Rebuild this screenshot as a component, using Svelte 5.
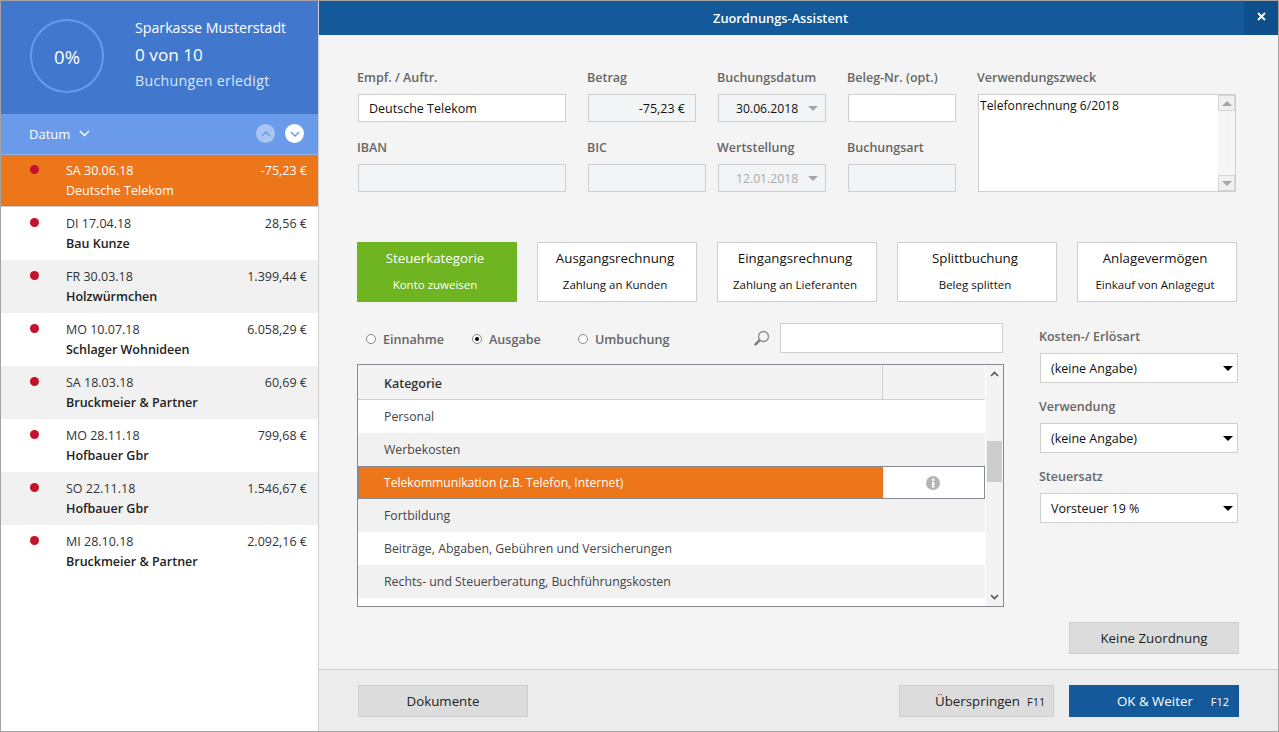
<script lang="ts">
const bookings = [
  { date: "SA 30.06.18", amount: "-75,23 €", name: "Deutsche Telekom" },
  { date: "DI 17.04.18", amount: "28,56 €", name: "Bau Kunze" },
  { date: "FR 30.03.18", amount: "1.399,44 €", name: "Holzwürmchen" },
  { date: "MO 10.07.18", amount: "6.058,29 €", name: "Schlager Wohnideen" },
  { date: "SA 18.03.18", amount: "60,69 €", name: "Bruckmeier & Partner" },
  { date: "MO 28.11.18", amount: "799,68 €", name: "Hofbauer Gbr" },
  { date: "SO 22.11.18", amount: "1.546,67 €", name: "Hofbauer Gbr" },
  { date: "MI 28.10.18", amount: "2.092,16 €", name: "Bruckmeier & Partner" }
];

const tiles = [
  { title: "Steuerkategorie", sub: "Konto zuweisen" },
  { title: "Ausgangsrechnung", sub: "Zahlung an Kunden" },
  { title: "Eingangsrechnung", sub: "Zahlung an Lieferanten" },
  { title: "Splittbuchung", sub: "Beleg splitten" },
  { title: "Anlagevermögen", sub: "Einkauf von Anlagegut" }
];

const categories = [
  "Personal",
  "Werbekosten",
  "Telekommunikation (z.B. Telefon, Internet)",
  "Fortbildung",
  "Beiträge, Abgaben, Gebühren und Versicherungen",
  "Rechts- und Steuerberatung, Buchführungskosten"
];

const radios = ["Einnahme", "Ausgabe", "Umbuchung"];
const selects = [
  { label: "Kosten-/ Erlösart", value: "(keine Angabe)" },
  { label: "Verwendung", value: "(keine Angabe)" },
  { label: "Steuersatz", value: "Vorsteuer 19 %" }
];
</script>

<div class="window">
  <aside class="sidebar">
    <header class="summary">
      <div class="ring">0%</div>
      <div class="summary-text">
        <div class="bank">Sparkasse Musterstadt</div>
        <div class="count">0 von 10</div>
        <div class="done">Buchungen erledigt</div>
      </div>
    </header>
    <div class="sortbar">
      <span class="sort-label">Datum</span>
      <svg class="sort-chevron" width="11" height="7" viewBox="0 0 11 7"><path d="M1 1l4.500 4.500L10 1" fill="none" stroke="#fff" stroke-width="1.400"/></svg>
      <span class="round faded">
        <svg width="10" height="6" viewBox="0 0 10 6"><path d="M1 5l4-4 4 4" fill="none" stroke="#6a9bea" stroke-width="1.500"/></svg>
      </span>
      <span class="round">
        <svg width="10" height="6" viewBox="0 0 10 6"><path d="M1 1l4 4 4-4" fill="none" stroke="#6a9bea" stroke-width="1.500"/></svg>
      </span>
    </div>
    <ul class="bookings">
      {#each bookings as b, i}
        <li class="booking" class:active={i == 0} class:alt={i % 2 == 0}>
          <span class="dot"></span>
          <div class="booking-body">
            <div class="booking-top"><span>{b.date}</span><span>{b.amount}</span></div>
            <div class="booking-name">{b.name}</div>
          </div>
        </li>
      {/each}
    </ul>
  </aside>

  <main class="main">
    <div class="titlebar">
      <span class="title">Zuordnungs-Assistent</span>
      <button class="close" aria-label="Schließen">
        <svg width="9" height="9" viewBox="0 0 9 9"><path d="M1 1l7 7M8 1l-7 7" stroke="#fff" stroke-width="1.800"/></svg>
      </button>
    </div>

    <div class="content">
      <section class="form">
        <label class="field"><span>Empf. / Auftr.</span><input value="Deutsche Telekom" /></label>
        <label class="field"><span>Betrag</span><input class="off right" value="-75,23 €" /></label>
        <div class="field">
          <span>Buchungsdatum</span>
          <div class="datebox"><span>30.06.2018</span><i class="tri grey"></i></div>
        </div>
        <label class="field"><span>Beleg-Nr. (opt.)</span><input /></label>
        <div class="field f-purpose">
          <span>Verwendungszweck</span>
          <div class="purpose">
            <div class="purpose-text">Telefonrechnung 6/2018</div>
            <div class="mini-scroll">
              <div class="mini-btn"><i class="tri up"></i></div>
              <div class="mini-track"></div>
              <div class="mini-btn"><i class="tri grey"></i></div>
            </div>
          </div>
        </div>
        <label class="field"><span>IBAN</span><input class="off" /></label>
        <label class="field f-bic"><span>BIC</span><input class="off" /></label>
        <div class="field">
          <span>Wertstellung</span>
          <div class="datebox disabled"><span>12.01.2018</span><i class="tri grey"></i></div>
        </div>
        <label class="field"><span>Buchungsart</span><input class="off" /></label>
      </section>

      <section class="tiles">
        {#each tiles as t, i}
          <button class="tile" class:picked={i == 0}>
            <span class="tile-title">{t.title}</span>
            <span class="tile-sub">{t.sub}</span>
          </button>
        {/each}
      </section>

      <section class="lower">
        <div class="lower-left">
          <div class="filter">
            <div class="radios">
              {#each radios as r, i}
                <span class="radio-item">
                  <span class="radio" class:on={i == 1}></span>{r}
                </span>
              {/each}
            </div>
            <svg class="lens" width="17" height="17" viewBox="0 0 17 17">
              <circle cx="10.500" cy="6.500" r="5" fill="none" stroke="#8a8a8a" stroke-width="1.300"/>
              <path d="M6.800 10.200L1.800 15.200" stroke="#7c7c7c" stroke-width="2.400"/>
            </svg>
            <input class="search" />
          </div>

          <div class="table">
            <div class="table-main">
              <div class="thead">
                <div class="th-name">Kategorie</div>
                <div class="th-extra"></div>
              </div>
              {#each categories as c, i}
                <div class="row" class:alt={i % 2 == 1} class:sel={i == 2}>
                  <div class="row-name">{c}</div>
                  {#if i == 2}
                    <div class="row-info">
                      <svg width="14" height="14" viewBox="0 0 14 14">
                        <circle cx="7" cy="7" r="7" fill="#b4b4b4"/>
                        <rect x="6" y="6" width="2.400" height="5.500" fill="#fff"/>
                        <rect x="6" y="2.700" width="2.400" height="2.200" fill="#fff"/>
                      </svg>
                    </div>
                  {/if}
                </div>
              {/each}
            </div>
            <div class="scrollbar">
              <svg width="9" height="6" viewBox="0 0 9 6"><path d="M1 5l3.500-3.500L8 5" fill="none" stroke="#555" stroke-width="1.600"/></svg>
              <div class="thumb"></div>
              <svg width="9" height="6" viewBox="0 0 9 6"><path d="M1 1l3.500 3.500L8 1" fill="none" stroke="#555" stroke-width="1.600"/></svg>
            </div>
          </div>
        </div>

        <div class="lower-right">
          {#each selects as s}
            <div class="select-field">
              <span class="select-label">{s.label}</span>
              <div class="select"><span>{s.value}</span><i class="tri black"></i></div>
            </div>
          {/each}
        </div>
      </section>

      <div class="none-row"><button class="btn">Keine Zuordnung</button></div>
    </div>

    <footer class="footer">
      <button class="btn">Dokumente</button>
      <div class="footer-right">
        <button class="btn skip">Überspringen<span class="key">F11</span></button>
        <button class="btn primary">OK &amp; Weiter<span class="key">F12</span></button>
      </div>
    </footer>
  </main>
</div>

<style>
:global(body) {
  margin: 0;
}

.window {
  display: flex;
  width: 1279px;
  height: 732px;
  box-sizing: border-box;
  border: 1px solid #a3a3a3;
  overflow: hidden;
  font-family: "Open Sans", "Noto Sans", sans-serif;
  font-size: 12.5px;
  color: #111;
  background: #f4f4f4;
}

/* Sidebar */
.sidebar {
  width: 317px;
  flex: none;
  background: #fff;
  border-right: 1px solid #cfcfcf;
}

.summary {
  display: flex;
  height: 113px;
  padding: 18px 0 0 29px;
  box-sizing: border-box;
  background: #4178cd;
  color: #fff;
}

.ring {
  width: 74px;
  height: 74px;
  box-sizing: border-box;
  border: 2.500px solid #6a9bea;
  border-radius: 50%;
  display: flex;
  align-items: center;
  justify-content: center;
  font-size: 18.500px;
}

.summary-text {
  margin: -5px 0 0 31px;
}

.bank {
  font-size: 14.200px;
  line-height: 27px;
}

.count {
  font-size: 17.200px;
  font-weight: 500;
  line-height: 27px;
}

.done {
  font-size: 14.200px;
  letter-spacing: 0.3px;
  line-height: 26px;
  color: #dbe7fa;
}

.sortbar {
  display: flex;
  align-items: center;
  height: 41px;
  padding: 0 14px 1px 28px;
  background: #6a9bea;
  border-bottom: 1px solid #8fb2ea;
  box-sizing: border-box;
  color: #fff;
  font-size: 13px;
}

.sort-chevron {
  margin-left: 9px;
  margin-right: auto;
}

.round {
  width: 19px;
  height: 19px;
  border-radius: 50%;
  background: #fff;
  display: flex;
  align-items: center;
  justify-content: center;
  margin-left: 10px;
}

.round.faded {
  background: #a9c5f2;
}

.bookings {
  list-style: none;
  margin: 0;
  padding: 0;
}

.booking {
  display: flex;
  height: 53px;
  box-sizing: border-box;
  padding: 8px 11px 0 29px;
  background: #fff;
}

.booking.alt {
  background: #f1f1f1;
}

.booking:first-child {
  height: 52px;
  padding-top: 7px;
  background: #ed761b;
  color: #fff;
  border-bottom: 1px solid #c9c9c9;
}

.dot {
  width: 9px;
  height: 9px;
  margin-top: 3px;
  border-radius: 50%;
  background: #c4122c;
  flex: none;
}

.booking-body {
  flex: 1;
  margin-left: 27px;
}

.booking-top {
  display: flex;
  justify-content: space-between;
  line-height: 17px;
  color: #333;
}

.booking.active .booking-top {
  color: #fff;
}

.booking-name {
  margin-top: 2px;
  line-height: 20px;
  font-weight: 600;
  color: #222;
}

.booking.active .booking-name {
  font-weight: 400;
  color: #fff;
}

/* Main */
.main {
  flex: 1;
  display: flex;
  flex-direction: column;
  min-width: 0;
}

.titlebar {
  position: relative;
  height: 34px;
  flex: none;
  display: flex;
  align-items: center;
  justify-content: center;
  padding-right: 36px;
  background: #145a9a;
  color: #fff;
  font-size: 12.800px;
  font-weight: 600;
}

.close {
  position: absolute;
  right: 0;
  top: 0;
  width: 34px;
  height: 34px;
  border: 0;
  padding: 0 0 3px;
  background: #0f4f8c;
  display: flex;
  align-items: center;
  justify-content: center;
}

.content {
  flex: 1;
  padding: 32px 0 0 39px;
  min-height: 0;
}

.form {
  display: grid;
  grid-template-columns: 208px 108px 108px 108px 258px;
  column-gap: 22px;
  row-gap: 15px;
}

.field {
  display: flex;
  flex-direction: column;
}

.field > span {
  height: 20px;
  margin: 0 0 7px -1px;
  line-height: 21px;
  font-weight: 600;
  color: #666;
  font-size: 12.500px;
}

.f-purpose {
  grid-column: 5;
  grid-row: 1 / 3;
}

.f-bic {
  width: 118px;
}

input {
  box-sizing: border-box;
  width: 100%;
  height: 28px;
  border: 1px solid #cfcfcf;
  background: #fff;
  padding: 0 10px;
  font: inherit;
  color: #111;
  outline: none;
}

input.off {
  background: #f2f4f6;
}

input.right {
  text-align: right;
}

.datebox {
  box-sizing: border-box;
  height: 28px;
  border: 1px solid #cfcfcf;
  background: #f2f4f6;
  display: flex;
  align-items: center;
  justify-content: space-between;
  padding: 0 7px 0 17px;
  font-size: 12.200px;
}

.datebox.disabled {
  color: #aaa;
}

.tri {
  display: block;
  width: 0;
  height: 0;
  border-left: 5px solid transparent;
  border-right: 5px solid transparent;
  border-top: 5px solid #000;
}

.tri.grey {
  border-top-color: #a6a6a6;
}

.tri.up {
  border-top: 0;
  border-bottom: 5px solid #a6a6a6;
}

.purpose {
  display: flex;
  flex: 1;
  box-sizing: border-box;
  border: 1px solid #cfcfcf;
  background: #fff;
}

.purpose-text {
  flex: 1;
  padding: 2px 1px;
  font-size: 12.200px;
  line-height: 18px;
}

.mini-scroll {
  width: 17px;
  display: flex;
  flex-direction: column;
}

.mini-btn {
  height: 16px;
  flex: none;
  display: flex;
  align-items: center;
  justify-content: center;
  background: #f0f0f0;
  border: 1px solid #d5d5d5;
  box-sizing: border-box;
}

.mini-track {
  flex: 1;
  background: repeating-conic-gradient(#ececec 0 25%, #fff 0 50%) 0 0 / 2px 2px;
}

.tiles {
  display: flex;
  gap: 20px;
  margin-top: 50px;
  margin-left: -1px;
}

.tile {
  width: 160px;
  height: 60px;
  padding: 0 4px 0 0;
  border: 1px solid #cfcfcf;
  background: #fff;
  color: #111;
  font: inherit;
  display: flex;
  flex-direction: column;
  align-items: center;
}

.tile.picked {
  background: #6eb521;
  border-color: #6eb521;
  color: #fff;
}

.tile-title {
  margin-top: 5px;
  line-height: 20px;
  font-size: 13.300px;
  font-weight: 500;
}

.tile-sub {
  margin-top: 8px;
  line-height: 17px;
  font-size: 11.500px;
}

.lower {
  display: flex;
  margin-left: -1px;
}

.lower-left {
  width: 647px;
  flex: none;
}

.filter {
  display: flex;
  align-items: center;
  height: 30px;
  margin-top: 21px;
}

.radios {
  display: flex;
  padding: 2px 0 0 9px;
}

.radio-item {
  display: flex;
  align-items: center;
  width: 106px;
  color: #666;
  font-size: 12.600px;
  font-weight: 600;
}

.radio {
  width: 10px;
  height: 10px;
  box-sizing: border-box;
  border: 1px solid #888;
  border-radius: 50%;
  margin-right: 7px;
  background: #fff;
  position: relative;
}

.radio.on::after {
  content: "";
  position: absolute;
  left: 2px;
  top: 2px;
  width: 4px;
  height: 4px;
  border-radius: 50%;
  background: #000;
}

.lens {
  margin-left: 69px;
  margin-right: 10px;
}

.search {
  width: 223px;
  height: 30px;
}

.table {
  display: flex;
  height: 243px;
  box-sizing: border-box;
  margin-top: 11px;
  border: 1px solid #858a90;
  background: #fff;
}

.table-main {
  flex: 1;
  min-width: 0;
}

.thead {
  display: flex;
  height: 35px;
  box-sizing: border-box;
  background: #f3f3f3;
  border-bottom: 1px solid #cfcfcf;
  font-weight: 600;
  color: #333;
}

.th-name {
  width: 525px;
  box-sizing: border-box;
  padding-left: 26px;
  line-height: 37px;
  border-right: 1px solid #cfcfcf;
}

.row {
  display: flex;
  height: 33px;
  font-size: 12.300px;
  color: #444;
}

.row.alt {
  background: #f1f1f1;
}

.row-name {
  flex: 1;
  padding-left: 26px;
  line-height: 33px;
}

.row.sel {
  background: #ed761b;
  color: #fff;
  font-size: 12.100px;
  outline: 1px solid #858a90;
  outline-offset: -1px;
}

.row-info {
  width: 99px;
  margin: 1px 1px 1px 0;
  padding-right: 2px;
  background: #fff;
  display: flex;
  align-items: center;
  justify-content: center;
}

.scrollbar {
  width: 18px;
  flex: none;
  display: flex;
  flex-direction: column;
  align-items: center;
  padding: 6px 0;
  box-sizing: border-box;
  background: #f3f3f3;
  border-left: 1px solid #fff;
}

.thumb {
  width: 15px;
  height: 41px;
  margin-top: 64px;
  margin-bottom: auto;
  background: #cdcdcd;
}

.lower-right {
  margin-left: 36px;
  padding-top: 25px;
  width: 198px;
}

.select-field {
  height: 70px;
}

.select-label {
  display: block;
  height: 18px;
  margin: 0 0 8px -1px;
  line-height: 20px;
  font-size: 12.500px;
  font-weight: 600;
  color: #666;
}

.select {
  height: 30px;
  box-sizing: border-box;
  border: 1px solid #cfcfcf;
  background: #fff;
  display: flex;
  align-items: center;
  justify-content: space-between;
  padding: 0 4px 0 10px;
}

.none-row {
  display: flex;
  justify-content: flex-end;
  padding-right: 39px;
  margin-top: 15px;
}

.btn {
  width: 170px;
  height: 32px;
  padding: 0;
  border: 1px solid #cfcfcf;
  background: #dcdcdc;
  color: #222;
  font: inherit;
  font-size: 13.300px;
  font-weight: 500;
}

.footer {
  height: 62px;
  flex: none;
  box-sizing: border-box;
  display: flex;
  justify-content: space-between;
  padding: 15px 39px 0 39px;
  background: #ececec;
  border-top: 1px solid #cfcfcf;
}

.footer-right {
  display: flex;
  gap: 15px;
}

.btn.skip {
  width: 155px;
  padding-left: 35px;
  text-align: left;
}

.btn.primary {
  padding-left: 47px;
  text-align: left;
  background: #145a9a;
  border-color: #145a9a;
  color: #fff;
}

.key {
  margin-left: 7px;
  font-weight: 400;
  font-size: 11px;
}

.btn.primary .key {
  margin-left: 18px;
}
</style>
